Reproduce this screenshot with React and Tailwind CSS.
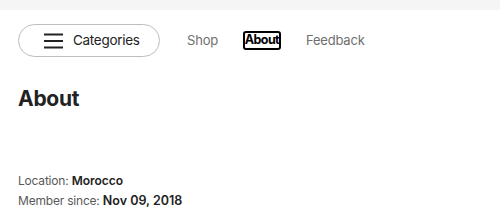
// Shop profile header with nav tabs and about section

const FONT = { fontFamily: "Inter, 'Liberation Sans', sans-serif" }

function Hamburger() {
  return (
    <svg width="19" height="16" viewBox="0 0 19 16" className="shrink-0">
      <rect x="0" y="0.5" width="19" height="2" fill="#222" />
      <rect x="0" y="7" width="19" height="2" fill="#222" />
      <rect x="0" y="13.5" width="19" height="2" fill="#222" />
    </svg>
  )
}

export default function App() {
  return (
    <div className="w-[500px] h-[223px] bg-white overflow-hidden text-[#222]" style={FONT}>
      <div className="h-[10px] bg-[#f5f5f5]" />

      {/* Nav */}
      <div className="flex items-center pl-[18px] pt-[14px]">
        <button className="flex items-center gap-[10px] h-[33px] w-[142px] pl-[25px] border border-[#bdbdbd] rounded-full text-[13.5px] text-[#222] tracking-[-0.3px]">
          <Hamburger />
          <span>Categories</span>
        </button>
        <nav className="flex items-center ml-[27px] text-[13px] text-[#6f6f6f]">
          <span className="tracking-[-0.2px]">Shop</span>
          <span className="ml-[25px] h-[19px] w-[38px] flex items-center justify-center border-2 border-black rounded-[3px] font-bold text-[12.5px] text-black tracking-[-0.6px]">
            About
          </span>
          <span className="ml-[25px] tracking-[-0.2px]">Feedback</span>
        </nav>
      </div>

      {/* About */}
      <h1 className="mt-[30px] pl-[18px] text-[21px] font-bold leading-[24px] text-[#222] tracking-[-0.3px]">
        About
      </h1>

      <div className="mt-[62px] pl-[18px] flex flex-col gap-[4px] text-[12px] leading-[16px]">
        <p>
          <span className="text-[#595959] tracking-[-0.2px]">Location: </span>
          <span className="font-semibold text-[#222]">Morocco</span>
        </p>
        <p>
          <span className="text-[#595959] tracking-[-0.2px]">Member since: </span>
          <span className="font-semibold text-[#222] text-[12.5px]">Nov 09, 2018</span>
        </p>
      </div>
    </div>
  )
}
